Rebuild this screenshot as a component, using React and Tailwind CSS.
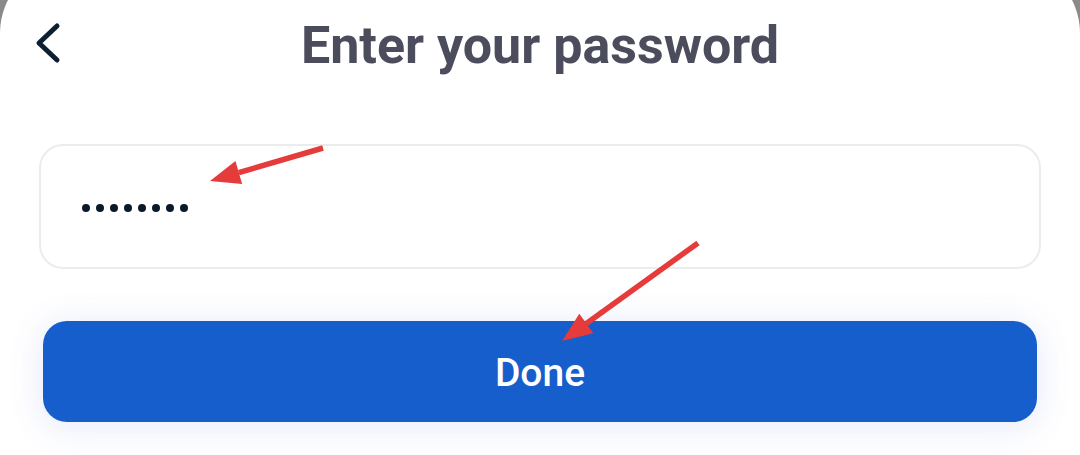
import React from 'react'

function Arrow({ x1, y1, x2, y2 }) {
  // red annotation arrow, head at (x2, y2)
  const ang = Math.atan2(y2 - y1, x2 - x1)
  const len = 30
  const half = 12
  const bx = x2 - Math.cos(ang) * len
  const by = y2 - Math.sin(ang) * len
  const px = -Math.sin(ang) * half
  const py = Math.cos(ang) * half
  return (
    <g>
      <line x1={x1} y1={y1} x2={bx} y2={by} stroke="#e53b3b" strokeWidth="5.5" />
      <polygon points={`${x2},${y2} ${bx + px},${by + py} ${bx - px},${by - py}`} fill="#e53b3b" />
    </g>
  )
}

export default function App() {
  return (
    <div className="relative w-[1080px] h-[455px] overflow-hidden bg-[#8a8a8a]" style={{ fontFamily: 'Roboto, "Liberation Sans", sans-serif' }}>
      <div className="mt-[-39px] h-[494px] bg-white rounded-t-[72px] pt-[39px]">
        {/* Header */}
        <div className="relative flex items-center justify-center h-[90px]">
          <button className="absolute left-[33px] top-[21px] text-[#0c1f33]">
            <svg width="28" height="44" viewBox="0 0 28 44" fill="none">
              <path d="M24 5 L6 22 L24 39" stroke="currentColor" strokeWidth="5" strokeLinecap="round" strokeLinejoin="round" />
            </svg>
          </button>
          <h1 className="text-[52px] font-bold text-[#4b4c5c] leading-none pt-[2px]">Enter your password</h1>
        </div>

        {/* Password field */}
        <div className="mt-[54px] mx-[39px] h-[125px] border-2 border-[#ececec] rounded-[24px] flex items-center pl-[41px] pt-[3px]">
          <div className="flex gap-[6px]">
            {Array.from({ length: 8 }).map((_, i) => (
              <span key={i} className="w-2 h-2 rounded-full bg-[#0a1a2a]" />
            ))}
          </div>
        </div>

        {/* Done button */}
        <div className="mt-[52px] mx-[43px]">
          <button className="w-full h-[101px] rounded-[24px] bg-[#155ecb] text-white text-[39px] font-medium shadow-[0_4px_36px_rgba(70,90,220,0.14)] flex items-center justify-center pt-[4px]">
            Done
          </button>
        </div>
      </div>

      {/* Annotations */}
      <svg className="absolute inset-0 pointer-events-none" width="1080" height="455">
        <Arrow x1={323} y1={148} x2={210} y2={181} />
        <Arrow x1={698} y1={243} x2={562} y2={341} />
      </svg>
    </div>
  )
}
